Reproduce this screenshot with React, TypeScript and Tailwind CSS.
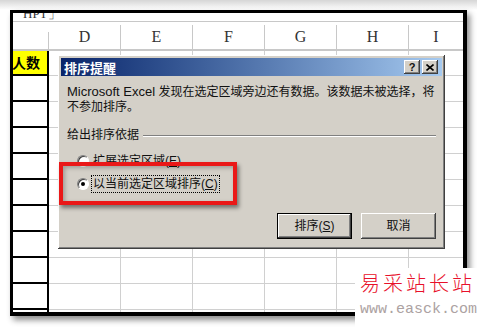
const raised =
  "shadow-[inset_-1px_-1px_#404040,inset_1px_1px_#ffffff,inset_-2px_-2px_#808080,inset_2px_2px_#d4d0c8]";

const COLS = ["D", "E", "F", "G", "H"];
const ROWS = Array.from({ length: 11 }, (_, i) => i);

function Radio({ checked }: { checked?: boolean }) {
  return (
    <div className="w-3 h-3 shrink-0 rounded-full bg-white border border-t-[#808080] border-l-[#808080] border-b-white border-r-white shadow-[inset_1px_1px_#404040] flex items-center justify-center">
      {checked && <div className="w-1 h-1 rounded-full bg-black" />}
    </div>
  );
}

function Sheet() {
  return (
    <div className="ml-[10px] w-[457px] h-[306px] border-[3px] border-r-4 border-b-4 border-black bg-white shadow-[3px_4px_6px_rgba(0,0,0,0.45)] overflow-hidden flex flex-col">
      {/* cut off row above the header */}
      <div className="h-[9px] shrink-0 border-b border-[#c8c8c8] overflow-hidden pl-[10px]">
        <div className="-mt-[7px] text-[13px] leading-[16px] text-[#333] font-['Liberation_Serif',serif]">
          HPT」
        </div>
      </div>

      {/* column letters */}
      <div className="h-[29px] shrink-0 flex border-b-2 border-[#c8c8c8]">
        <div className="w-[36px] flex flex-col">
          <div className="h-[10px]" />
          <div className="flex-1 border-r border-[#c8c8c8]" />
        </div>
        {COLS.map((c) => (
          <div key={c} className="w-[72px] flex flex-col">
            <div className="h-[10px]" />
            <div className="flex-1 border-r border-[#c8c8c8] flex items-center justify-center text-[16px] text-[#333] font-['Liberation_Serif',serif]">
              {c}
            </div>
          </div>
        ))}
        <div className="flex-1 flex flex-col">
          <div className="h-[10px]" />
          <div className="flex-1 flex items-center justify-center text-[16px] text-[#333] font-['Liberation_Serif',serif]">
            I
          </div>
        </div>
      </div>

      {ROWS.map((r) => (
        <div key={r} className={`flex shrink-0 ${r === 0 ? "h-[25px]" : "h-[26px]"}`}>
          <div
            className={`w-[36px] border-b-2 border-r-2 border-black overflow-hidden flex items-center justify-end pr-[7px] ${
              r === 0 ? "bg-[#ffff00]" : ""
            }`}
          >
            {r === 0 && (
              <span className="text-[14px] font-bold whitespace-nowrap font-['Noto_Sans_CJK_SC',sans-serif]">
                人数
              </span>
            )}
          </div>
          {COLS.map((c) => (
            <div key={c} className="w-[72px] border-b border-r border-[#d0d0d0]" />
          ))}
          <div className="flex-1 border-b border-[#d0d0d0]" />
        </div>
      ))}
    </div>
  );
}

function SortDialog() {
  return (
    <div
      className={`absolute left-[58px] top-[55px] w-[387px] h-[194px] bg-[#d4d0c8] p-[3px] flex flex-col text-[12px] text-[#111] font-['Liberation_Sans','Noto_Sans_CJK_SC',sans-serif] ${raised}`}
    >
      {/* title bar */}
      <div className="h-[18px] shrink-0 flex items-center bg-gradient-to-r from-[#0a246a] to-[#a6caf0] pl-[3px] pr-[4px]">
        <span className="text-[13px] font-bold text-white leading-none font-['Noto_Sans_CJK_SC',sans-serif]">
          排序提醒
        </span>
        <div className="ml-auto flex gap-[2px]">
          <div className={`w-4 h-[14px] bg-[#d4d0c8] flex items-center justify-center text-[11px] font-bold leading-none ${raised}`}>
            ?
          </div>
          <div className={`w-4 h-[14px] bg-[#d4d0c8] flex items-center justify-center ${raised}`}>
            <svg width="8" height="7" viewBox="0 0 8 7">
              <path d="M0.5 0.5L7.5 6.5M7.5 0.5L0.5 6.5" stroke="#000" strokeWidth="1.6" />
            </svg>
          </div>
        </div>
      </div>

      <div className="flex-1 flex flex-col px-[6px]">
        <p className="mt-[8px] leading-[15px] whitespace-nowrap">
          <span className="text-[13px]">Microsoft Excel</span> 发现在选定区域旁边还有数据。该数据未被选择，将
          <br />
          不参加排序。
        </p>

        <div className="mt-[13px] h-[15px] flex items-center gap-[4px]">
          <span className="leading-[15px]">给出排序依据</span>
          <div className="flex-1 h-[2px] border-t border-[#808080] border-b border-b-white" />
        </div>

        <div className="mt-[10px] h-[16px] pl-[10px] flex items-center gap-[4px]">
          <Radio />
          <span>
            扩展选定区域(<span className="underline">E</span>)
          </span>
        </div>

        <div className="mt-[6px] h-[18px] pl-[10px] flex items-center gap-[2px]">
          <Radio checked />
          <span className="h-[18px] flex items-center px-[1px] border border-dotted border-black">
            以当前选定区域排序(<span className="underline">C</span>)
          </span>
        </div>

        <div className="mt-[20px] flex justify-end gap-[9px]">
          <button
            type="button"
            className={`w-[75px] h-[26px] bg-[#d4d0c8] border border-black flex items-center justify-center ${raised}`}
          >
            排序(<span className="underline">S</span>)
          </button>
          <button
            type="button"
            className={`w-[75px] h-[26px] bg-[#d4d0c8] flex items-center justify-center ${raised}`}
          >
            取消
          </button>
        </div>
      </div>
    </div>
  );
}

export default function App() {
  return (
    <div className="relative w-[477px] h-[327px] overflow-hidden bg-white">
      <div className="h-[10px] bg-gradient-to-b from-[#d6d6d6] to-white" />
      <Sheet />
      <SortDialog />

      {/* red highlight */}
      <div className="absolute left-[59px] top-[162px] w-[178px] h-[43px] border-[4px] border-[#ea1818] shadow-[2px_3px_4px_rgba(0,0,0,0.45),inset_2px_2px_4px_rgba(0,0,0,0.25)]" />

      {/* watermark */}
      <div className="absolute left-[355px] top-[268px] w-[122px] h-[59px] bg-white pl-[5px] pt-[4px]">
        <div className="text-[20px] leading-[22px] tracking-[3px] whitespace-nowrap text-[#e8102a] font-light font-['Noto_Sans_CJK_SC',sans-serif]">
          易采站长站
        </div>
        <div className="mt-[8px] text-[15px] leading-[16px] whitespace-nowrap text-[#aca2a2] font-['Liberation_Mono',monospace]">
          www.easck.com
        </div>
      </div>
    </div>
  );
}
